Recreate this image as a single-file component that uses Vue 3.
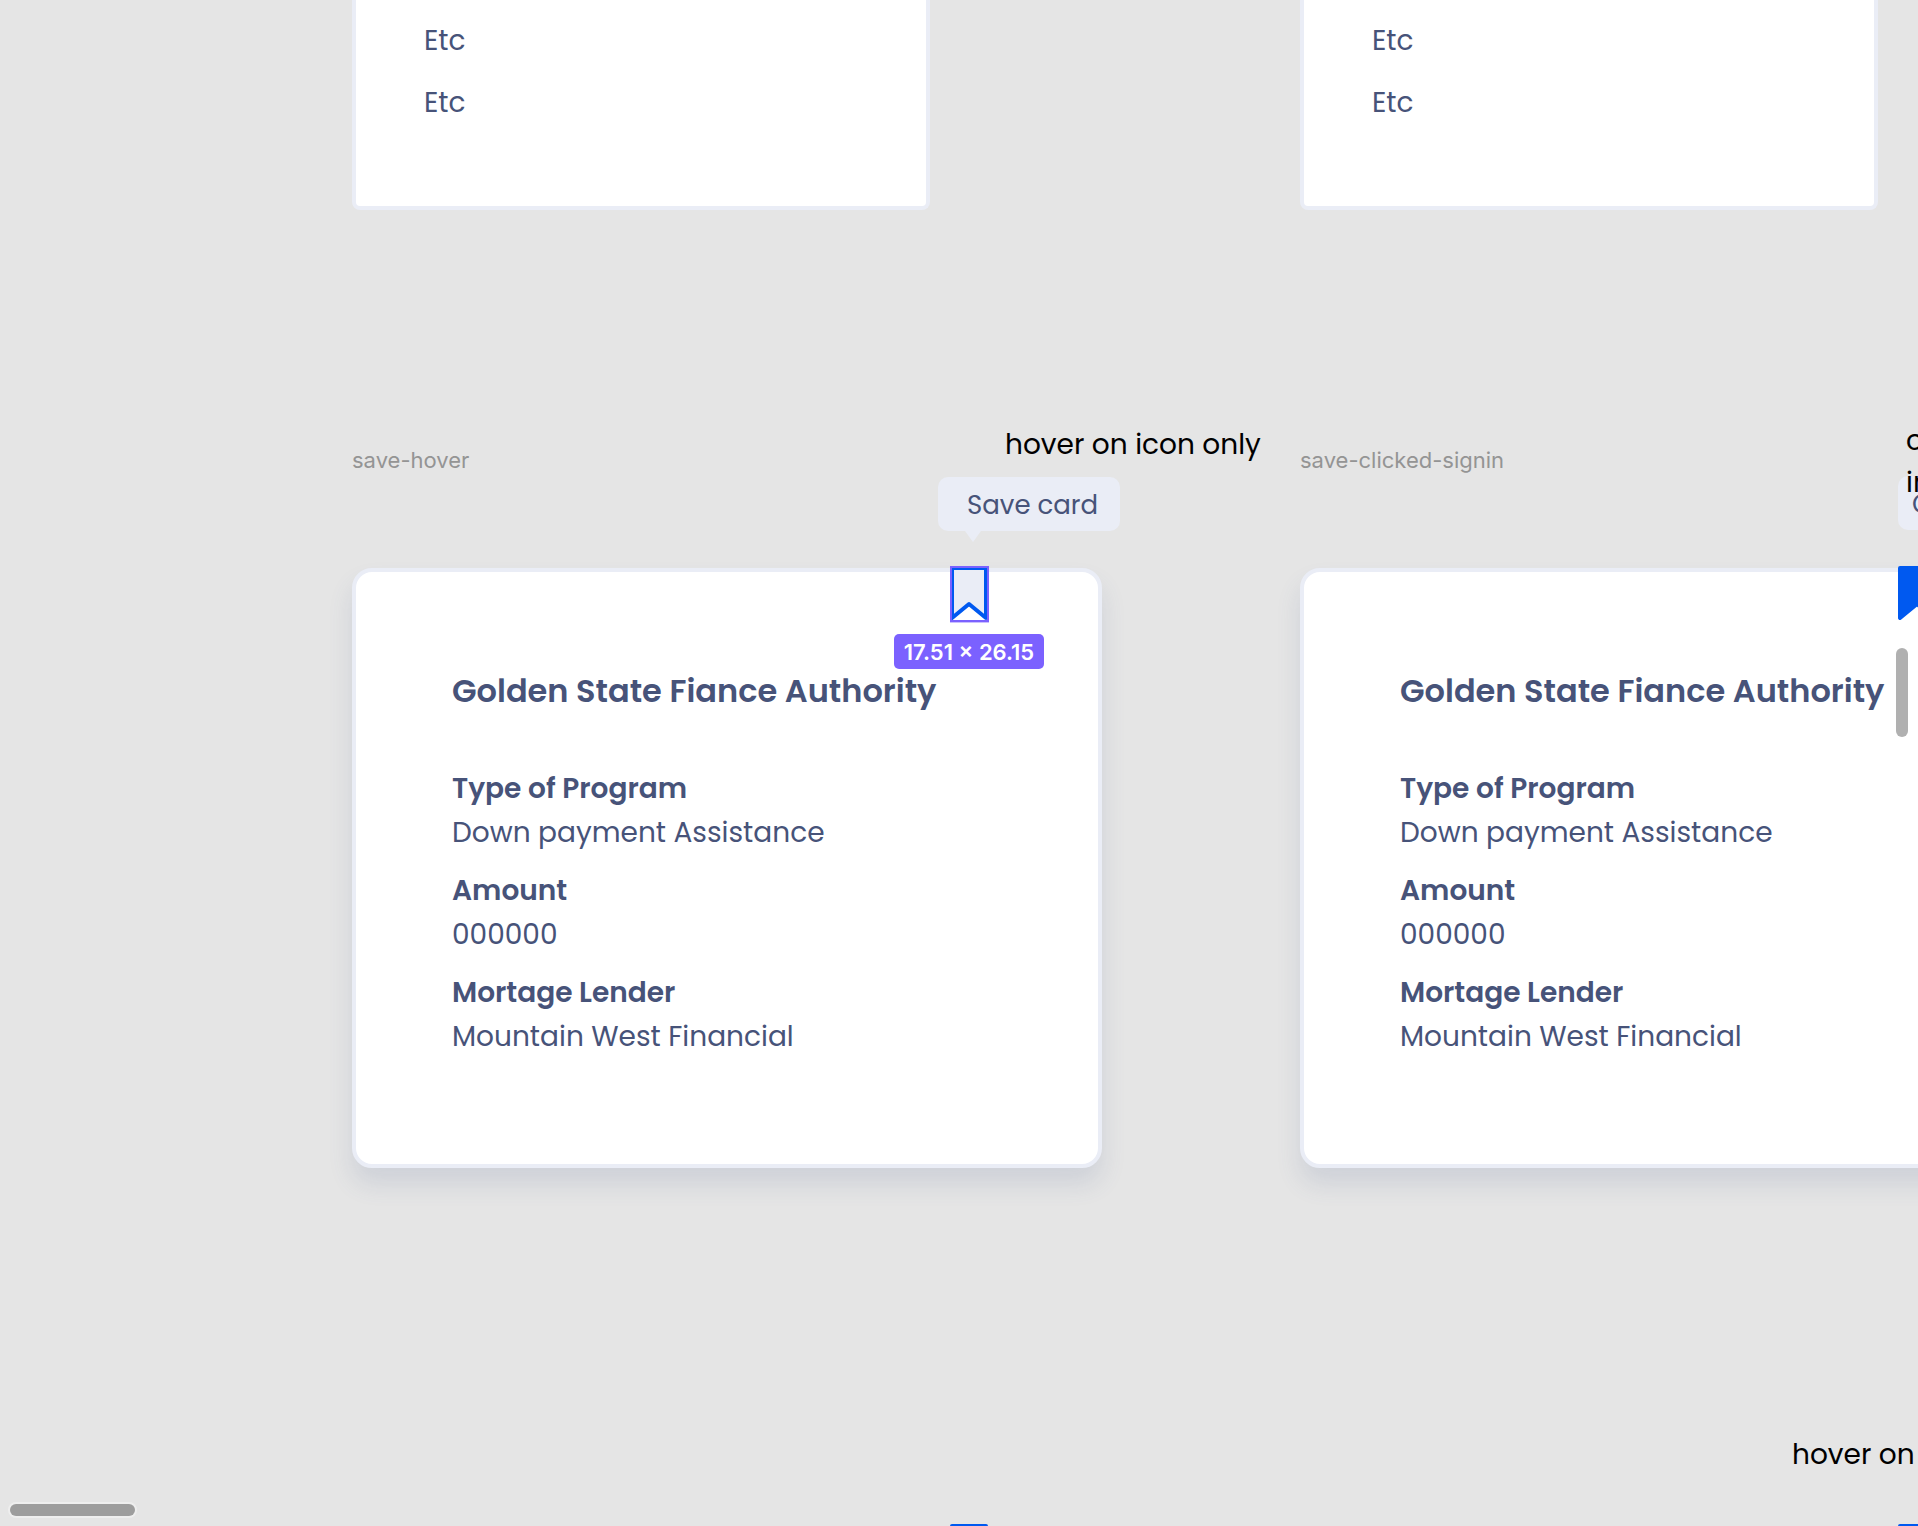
<script setup>
const boards = [
  { id: 'hover', label: 'save-hover', tip: 'Save card', saved: false, note: ['hover on icon only'] },
  { id: 'clicked', label: 'save-clicked-signin', tip: 'C', saved: true, note: ['c', 'in'] },
]

const details = [
  { term: 'Type of Program', value: 'Down payment Assistance' },
  { term: 'Amount', value: '000000' },
  { term: 'Mortage Lender', value: 'Mountain West Financial' },
]
</script>

<template>
  <main class="canvas">
    <section class="row">
      <div v-for="board in boards" :key="board.id" class="column">
        <ul class="list-frame">
          <li>Etc</li>
          <li>Etc</li>
        </ul>
      </div>
    </section>

    <section class="row boards">
      <article v-for="board in boards" :key="board.id" class="column" :class="board.id">
        <p class="label">{{ board.label }}</p>
        <div class="board">
          <div class="card">
            <h2>Golden State Fiance Authority</h2>
            <dl>
              <div v-for="item in details" :key="item.term">
                <dt>{{ item.term }}</dt>
                <dd>{{ item.value }}</dd>
              </div>
            </dl>
          </div>
          <div class="tooltip" role="tooltip">{{ board.tip }}</div>
          <button class="bookmark" type="button" :aria-label="board.tip" :aria-pressed="board.saved">
            <svg width="39" height="57" viewBox="0 0 39 57">
              <path class="ribbon" d="M2 2H36V52L19 38L2 52Z" />
              <path v-if="!board.saved" fill="none" stroke="#7b61ff" stroke-width="2" d="M1 1H38V55H1Z" />
              <rect v-if="!board.saved" y="56" width="39" height="1" fill="#7b61ff" fill-opacity=".4" />
            </svg>
          </button>
          <span v-if="!board.saved" class="size">17.51 × 26.15</span>
          <p class="note">
            <span v-for="line in board.note" :key="line">{{ line }}</span>
          </p>
        </div>
      </article>
    </section>

    <section class="row next">
      <div v-for="board in boards" :key="board.id" class="column">
        <div class="board">
          <p v-if="board.saved" class="note">hover on</p>
          <button class="bookmark" type="button" aria-label="Save card">
            <svg width="39" height="57" viewBox="0 0 39 57">
              <path class="ribbon" d="M2 2H36V52L19 38L2 52Z" />
            </svg>
          </button>
        </div>
      </div>
    </section>

    <div class="scroll vertical"></div>
    <div class="scroll horizontal"></div>
  </main>
</template>

<style>
body {
  margin: 0;
  background: #e5e5e5;
}
</style>

<style scoped>
.canvas {
  position: relative;
  box-sizing: border-box;
  height: 100vh;
  overflow: hidden;
  padding-left: 352px;
  background: #e5e5e5;
  color: #475379;
  font: 28px/44px Poppins, Inter, sans-serif;
}
p, h2, dl, dd, ul {
  margin: 0;
  padding: 0;
}
.row {
  display: flex;
  gap: 198px;
}
.column {
  flex: 0 0 750px;
}
.list-frame {
  display: flex;
  flex-direction: column;
  gap: 18px;
  box-sizing: border-box;
  width: 578px;
  padding: 19px 68px 81px;
  border: 4px solid #eaedf6;
  border-top: 0;
  border-radius: 0 0 8px 8px;
  background: #fff;
  list-style: none;
}
.boards {
  padding-top: 236px;
}
.label {
  margin-bottom: 94px;
  color: #949494;
  font-family: Inter, sans-serif;
  font-size: 22px;
  line-height: 28px;
}
.board {
  position: relative;
}
.card {
  box-sizing: border-box;
  min-height: 600px;
  padding: 95px 96px;
  border: 4px solid #eaedf6;
  border-radius: 20px;
  background: #fff;
  box-shadow: 0 16px 24px rgba(71, 93, 143, .14);
}
h2 {
  margin-bottom: 52px;
  font-size: 32px;
  font-weight: 600;
  line-height: 48px;
  white-space: nowrap;
}
dl {
  display: flex;
  flex-direction: column;
  gap: 14px;
}
dt {
  font-weight: 600;
}
.tooltip {
  position: absolute;
  top: -91px;
  left: 586px;
  box-sizing: border-box;
  width: 182px;
  height: 54px;
  padding: 6px 0 0 29px;
  border-radius: 10px;
  background: #eaedf6;
  font-size: 26px;
  white-space: nowrap;
}
.tooltip::after {
  content: "";
  position: absolute;
  top: 54px;
  left: 27px;
  border: solid transparent;
  border-width: 11px 8px 0;
  border-top-color: #eaedf6;
}
.clicked .tooltip {
  top: -92px;
  left: 598px;
  padding-left: 14px;
}
.bookmark {
  position: absolute;
  top: -2px;
  left: 598px;
  padding: 0;
  border: 0;
  background: none;
}
.bookmark svg {
  display: block;
}
.ribbon {
  fill: #eaedf6;
  stroke: #0059f0;
  stroke-width: 4;
  stroke-linejoin: round;
}
.clicked .ribbon {
  fill: #0059f0;
}
.size {
  position: absolute;
  top: 66px;
  left: 542px;
  width: 150px;
  padding-top: 1px;
  border-radius: 5px;
  background: #7b61ff;
  color: #fff;
  font-family: Inter, sans-serif;
  font-size: 22px;
  font-weight: 600;
  line-height: 34px;
  text-align: center;
  white-space: nowrap;
}
.note {
  position: absolute;
  top: -144px;
  left: 653px;
  color: #000;
  line-height: 42px;
  white-space: nowrap;
}
.note span {
  display: block;
}
.clicked .note {
  top: -148px;
  left: 606px;
}
.next {
  padding-top: 358px;
}
.next .note {
  top: -92px;
  left: 492px;
}
.scroll {
  position: absolute;
  border-radius: 8px;
}
.vertical {
  top: 648px;
  right: 10px;
  width: 12px;
  height: 89px;
  background: #b0b0b0;
}
.horizontal {
  bottom: 10px;
  left: 10px;
  width: 125px;
  height: 12px;
  background: #9d9d9d;
  box-shadow: 0 0 0 2px #eee;
}
</style>
